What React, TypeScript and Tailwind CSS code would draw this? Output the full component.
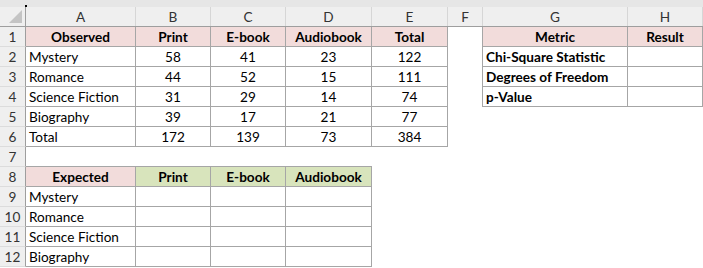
import React from "react"

type Cell = {
  t?: string
  bold?: boolean
  align?: "l" | "c"
  bg?: string
  r?: boolean
  b?: boolean
}

const cols = ["A", "B", "C", "D", "E", "F", "G", "H"]
const widths = ["w-[110px]", "w-[75px]", "w-[75px]", "w-[86px]", "w-[76px]", "w-[35px]", "w-[145px]", "w-[75px]"]

const pink = "bg-[#f2dcdb]"
const green = "bg-[#d8e4bc]"

const hd = (t: string, bg = pink): Cell => ({ t, bold: true, align: "c", bg, r: true, b: true })
const lbl = (t: string): Cell => ({ t, align: "l", r: true, b: true })
const num = (t: string): Cell => ({ t, align: "c", r: true, b: true })
const box = (): Cell => ({ r: true, b: true })
const none = (): Cell => ({})

const observed: [string, string, string, string, string][] = [
  ["Mystery", "58", "41", "23", "122"],
  ["Romance", "44", "52", "15", "111"],
  ["Science Fiction", "31", "29", "14", "74"],
  ["Biography", "39", "17", "21", "77"],
  ["Total", "172", "139", "73", "384"],
]

const metrics = ["Chi-Square Statistic", "Degrees of Freedom", "p-Value"]
const expected = ["Mystery", "Romance", "Science Fiction", "Biography"]

function buildRows(): Cell[][] {
  const rows: Cell[][] = []
  rows.push([
    hd("Observed"), hd("Print"), hd("E-book"), hd("Audiobook"), hd("Total"),
    { r: true }, hd("Metric"), hd("Result"),
  ])
  observed.forEach((o, i) => {
    const row: Cell[] = [lbl(o[0]), num(o[1]), num(o[2]), num(o[3]), num(o[4])]
    if (i < 3) {
      row.push({ r: true }, { t: metrics[i], bold: true, align: "l", r: true, b: true }, box())
    } else {
      row.push(none(), none(), none())
    }
    rows.push(row)
  })
  rows.push([{ b: true }, { b: true }, { b: true }, { b: true }, none(), none(), none(), none()])
  rows.push([hd("Expected"), hd("Print", green), hd("E-book", green), hd("Audiobook", green), none(), none(), none(), none()])
  expected.forEach((e) => {
    rows.push([lbl(e), box(), box(), box(), none(), none(), none(), none()])
  })
  return rows
}

export default function App() {
  const rows = buildRows()
  return (
    <div className="w-[703px] h-[268px] bg-white overflow-hidden text-[13.6px] text-black font-['Lato','Liberation_Sans',sans-serif]">
      <div className="h-[7px] bg-[#e6e6e6] relative">
        <div className="absolute left-[25px] top-[5px] w-[2px] h-[2px] bg-black" />
      </div>
      <div className="flex h-[20px] bg-[#efefef] border-b border-[#9e9e9e] text-[#333]">
        <div className="w-[26px] shrink-0 border-r border-[#9e9e9e] relative">
          <svg className="absolute right-[3px] bottom-[3px]" width="13" height="13" viewBox="0 0 13 13">
            <polygon points="13,0 13,13 0,13" fill="#c4c4c4" />
          </svg>
        </div>
        {cols.map((c, i) => (
          <div key={c} className={`${widths[i]} shrink-0 border-r border-[#d6d6d6] flex items-center justify-center leading-none pt-[2px]`}>
            {c}
          </div>
        ))}
      </div>
      {rows.map((row, ri) => (
        <div key={ri} className="flex h-[20px]">
          <div className="w-[26px] shrink-0 bg-[#efefef] border-r border-[#9e9e9e] border-b border-b-[#dcdcdc] flex items-center justify-center text-[#333] leading-none pt-[2px]">
            {ri + 1}
          </div>
          {row.map((cell, ci) => (
            <div
              key={ci}
              className={`${widths[ci]} shrink-0 box-border flex items-center leading-none whitespace-nowrap overflow-hidden pt-[2px] ${cell.bg ?? ""} ${cell.r ? "border-r border-r-[#a6a6a6]" : ""} ${cell.b ? "border-b border-b-[#a6a6a6]" : ""} ${cell.align === "c" ? "justify-center" : "justify-start pl-[3px]"} ${cell.bold ? "font-bold" : ""}`}
            >
              {cell.t}
            </div>
          ))}
        </div>
      ))}
    </div>
  )
}
